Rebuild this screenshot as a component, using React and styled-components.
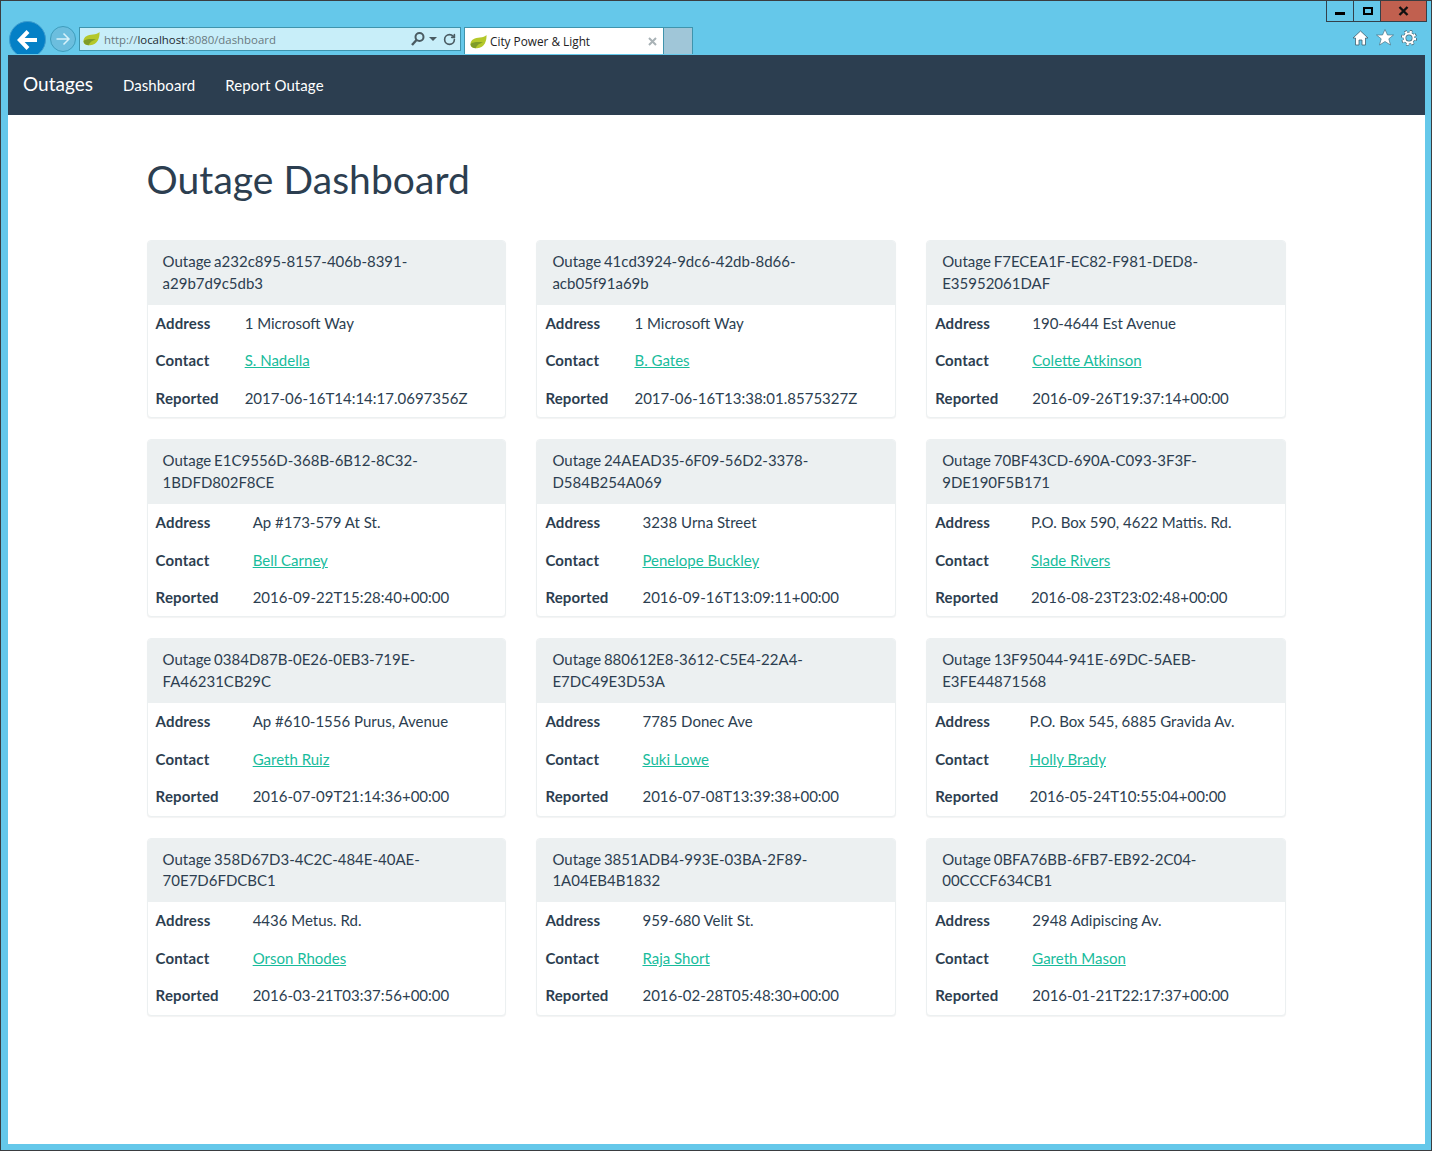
import styled, { createGlobalStyle } from "styled-components";
import { RotateCw } from "lucide-react";

const outages = [
  { id: "a232c895-8157-406b-8391-a29b7d9c5db3", address: "1 Microsoft Way", contact: "S. Nadella", reported: "2017-06-16T14:14:17.0697356Z" },
  { id: "41cd3924-9dc6-42db-8d66-acb05f91a69b", address: "1 Microsoft Way", contact: "B. Gates", reported: "2017-06-16T13:38:01.8575327Z" },
  { id: "F7ECEA1F-EC82-F981-DED8-E35952061DAF", address: "190-4644 Est Avenue", contact: "Colette Atkinson", reported: "2016-09-26T19:37:14+00:00" },
  { id: "E1C9556D-368B-6B12-8C32-1BDFD802F8CE", address: "Ap #173-579 At St.", contact: "Bell Carney", reported: "2016-09-22T15:28:40+00:00" },
  { id: "24AEAD35-6F09-56D2-3378-D584B254A069", address: "3238 Urna Street", contact: "Penelope Buckley", reported: "2016-09-16T13:09:11+00:00" },
  { id: "70BF43CD-690A-C093-3F3F-9DE190F5B171", address: "P.O. Box 590, 4622 Mattis. Rd.", contact: "Slade Rivers", reported: "2016-08-23T23:02:48+00:00" },
  { id: "0384D87B-0E26-0EB3-719E-FA46231CB29C", address: "Ap #610-1556 Purus, Avenue", contact: "Gareth Ruiz", reported: "2016-07-09T21:14:36+00:00" },
  { id: "880612E8-3612-C5E4-22A4-E7DC49E3D53A", address: "7785 Donec Ave", contact: "Suki Lowe", reported: "2016-07-08T13:39:38+00:00" },
  { id: "13F95044-941E-69DC-5AEB-E3FE44871568", address: "P.O. Box 545, 6885 Gravida Av.", contact: "Holly Brady", reported: "2016-05-24T10:55:04+00:00" },
  { id: "358D67D3-4C2C-484E-40AE-70E7D6FDCBC1", address: "4436 Metus. Rd.", contact: "Orson Rhodes", reported: "2016-03-21T03:37:56+00:00" },
  { id: "3851ADB4-993E-03BA-2F89-1A04EB4B1832", address: "959-680 Velit St.", contact: "Raja Short", reported: "2016-02-28T05:48:30+00:00" },
  { id: "0BFA76BB-6FB7-EB92-2C04-00CCCF634CB1", address: "2948 Adipiscing Av.", contact: "Gareth Mason", reported: "2016-01-21T22:17:37+00:00" },
];

const Leaf = () => (
  <svg width="17" height="14" viewBox="0 0 17 14">
    <path d="M0.500 9C0.500 4.500 5 2.800 10 2.500C13 2.300 15 1.500 16.500 0C16.800 5 15 13 7 13.300C3 13.400 0.500 12 0.500 9Z" fill="#b4c82a" />
    <path d="M0.500 9C3 7 8 6.500 13 7.500C10 8 7 10 5.500 13.200C2.500 13 0.700 11.500 0.500 9Z" fill="#7f9c28" />
  </svg>
);

const App = () => {
  return (
    <Frame>
      <GlobalStyle />
      <Chrome>
        <Caption>
          <WindowButton>
            <MinimizeMark />
          </WindowButton>
          <WindowButton>
            <MaximizeMark />
          </WindowButton>
          <CloseButton>
            <svg width="11" height="10" viewBox="0 0 11 10">
              <path d="M1.500 1L9.500 9M9.500 1L1.500 9" stroke="#111" strokeWidth="2.400" />
            </svg>
          </CloseButton>
        </Caption>
        <Toolbar>
          <BackButton>
            <svg width="24" height="24" viewBox="0 0 24 24" fill="none">
              <path d="M21 12H4M12 3.500L3.800 12L12 20.500" stroke="#fff" strokeWidth="4" />
            </svg>
          </BackButton>
          <ForwardButton>
            <svg width="16" height="16" viewBox="0 0 16 16" fill="none">
              <path d="M1.500 8H13.500M8.500 2.500L14 8L8.500 13.500" stroke="#d8f2fa" strokeWidth="1.500" />
            </svg>
          </ForwardButton>
          <AddressBar>
            <Leaf />
            <Url>
              http://<strong>localhost</strong>:8080/dashboard
            </Url>
            <svg width="16" height="16" viewBox="0 0 16 16" fill="none">
              <circle cx="9.500" cy="6" r="4" stroke="#4a5b62" strokeWidth="2" />
              <path d="M6.500 9L2 14" stroke="#4a5b62" strokeWidth="2.400" />
            </svg>
            <DropArrow />
            <RotateCw size={13} color="#4a5b62" strokeWidth={3} />
          </AddressBar>
          <Tab>
            <Leaf />
            <TabTitle>City Power &amp; Light</TabTitle>
            <svg width="9" height="9" viewBox="0 0 9 9">
              <path d="M1 1L8 8M8 1L1 8" stroke="#a9b2b6" strokeWidth="2" />
            </svg>
          </Tab>
          <NewTab />
          <Tools>
            <svg width="17" height="16" viewBox="0 0 17 16">
              <path d="M8.500 1L16 8H13.500V15H10V10H7V15H3.500V8H1Z" fill="#fff" stroke="#40606e" strokeWidth="0.800" />
            </svg>
            <svg width="18" height="17" viewBox="0 0 18 17">
              <path d="M9 0.500L11.500 6H17.500L12.800 9.800L14.500 16L9 12.500L3.500 16L5.200 9.800L0.500 6H6.500Z" fill="#fff" stroke="#40606e" strokeWidth="0.600" />
            </svg>
            <svg width="16" height="16" viewBox="0 0 16 16" fill="none">
              <circle cx="8" cy="8" r="4.500" stroke="#40606e" strokeWidth="3.400" />
              <circle cx="8" cy="8" r="6.500" stroke="#40606e" strokeWidth="3" strokeDasharray="2.500 2.600" />
              <circle cx="8" cy="8" r="4.500" stroke="#fff" strokeWidth="2" />
              <circle cx="8" cy="8" r="6" stroke="#fff" strokeWidth="2.400" strokeDasharray="2.200 2.500" />
            </svg>
          </Tools>
        </Toolbar>
      </Chrome>
      <Page>
        <Navbar>
          <Brand href="#">Outages</Brand>
          <NavLink href="#">Dashboard</NavLink>
          <NavLink href="#">Report Outage</NavLink>
        </Navbar>
        <Container>
          <Title>Outage Dashboard</Title>
          <CardGrid>
            {outages.map((outage) => (
              <Card key={outage.id}>
                <CardHeader>{`Outage ${outage.id}`}</CardHeader>
                <DetailTable>
                  <tbody>
                    <tr>
                      <th>Address</th>
                      <td>{outage.address}</td>
                    </tr>
                    <tr>
                      <th>Contact</th>
                      <td>
                        <ContactLink href="#">{outage.contact}</ContactLink>
                      </td>
                    </tr>
                    <tr>
                      <th>Reported</th>
                      <td>{outage.reported}</td>
                    </tr>
                  </tbody>
                </DetailTable>
              </Card>
            ))}
          </CardGrid>
        </Container>
      </Page>
    </Frame>
  );
};

export default App;

const GlobalStyle = createGlobalStyle`
  * {
    box-sizing: border-box;
  }
  body {
    margin: 0;
    font-family: Lato, "Liberation Sans", sans-serif;
    font-size: 15px;
    line-height: 1.42857;
    color: #2c3e50;
  }
`;

const Frame = styled.div`
  display: flex;
  flex-direction: column;
  height: 1151px;
  padding: 0 6px 6px 7px;
  background: #65c8ea;
  border: 1px solid #3a3d40;
`;

const Chrome = styled.div`
  height: 53px;
  flex: none;
  margin-left: -7px;
  margin-right: -6px;
  overflow: hidden;
`;

const Caption = styled.div`
  display: flex;
  justify-content: flex-end;
  height: 21px;
  padding-right: 4px;
`;

const WindowButton = styled.div`
  display: flex;
  align-items: center;
  justify-content: center;
  width: 28px;
  height: 21px;
  border: 1px solid #33404a;
  border-top: 0;
  margin-left: -1px;
`;

const CloseButton = styled(WindowButton)`
  width: 47px;
  background: #c1604f;
`;

const MinimizeMark = styled.span`
  width: 10px;
  height: 3px;
  margin-top: 5px;
  background: #000;
`;

const MaximizeMark = styled.span`
  width: 10px;
  height: 8px;
  margin-left: 1px;
  border: 2px solid #000;
`;

const Toolbar = styled.div`
  display: flex;
  align-items: flex-start;
  height: 32px;
  padding: 5px 0 0 8px;
`;

const BackButton = styled.div`
  display: flex;
  flex: none;
  align-items: center;
  justify-content: center;
  width: 37px;
  height: 37px;
  margin-top: -6px;
  border-radius: 50%;
  background: #0480c6;
  border: 1px solid #3c9ccf;
`;

const ForwardButton = styled.div`
  display: flex;
  flex: none;
  align-items: center;
  justify-content: center;
  width: 26px;
  height: 26px;
  margin: -1px 2px 0 4px;
  border-radius: 50%;
  background: #6cbede;
  border: 1px solid #3f9dbd;
`;

const AddressBar = styled.div`
  display: flex;
  flex: none;
  align-items: center;
  width: 382px;
  height: 24px;
  margin-left: 1px;
  padding: 0 4px 0 3px;
  background: #c8eef9;
  border: 1px solid #3f94ad;
`;

const Url = styled.span`
  flex: 1;
  margin: 2px 0 0 4px;
  font-family: "Open Sans", sans-serif;
  font-size: 11.4px;
  color: #68797f;
  white-space: nowrap;

  strong {
    font-weight: 400;
    color: #1d2a30;
  }
`;

const DropArrow = styled.span`
  width: 0;
  height: 0;
  margin: 0 6px 0 3px;
  border-left: 4px solid transparent;
  border-right: 4px solid transparent;
  border-top: 4px solid #4a5b62;
`;

const Tab = styled.div`
  display: flex;
  flex: none;
  align-items: center;
  width: 199px;
  height: 28px;
  margin-left: 3px;
  padding: 0 6px 0 5px;
  background: #fff;
  border: 1px solid #3f94ad;
  border-bottom: 0;
  border-right: 0;
`;

const TabTitle = styled.span`
  flex: 1;
  margin-left: 3px;
  font-family: "Open Sans", sans-serif;
  font-size: 11.8px;
  color: #222;
  white-space: nowrap;
`;

const NewTab = styled.div`
  flex: none;
  width: 30px;
  height: 28px;
  background: #a0c6d8;
  border: 1px solid #3f94ad;
  border-bottom: 0;
`;

const Tools = styled.div`
  display: flex;
  align-items: center;
  gap: 7px;
  margin: 2px 0 0 auto;
  padding-right: 14px;
`;

const Page = styled.div`
  flex: 1;
  margin-top: 1px;
  background: #fff;
`;

const Navbar = styled.nav`
  display: flex;
  align-items: center;
  height: 60px;
  background: #2c3e50;
`;

const Brand = styled.a`
  padding: 0 15px 2px;
  font-size: 19px;
  color: #fff;
  text-decoration: none;
`;

const NavLink = styled.a`
  padding: 2px 15px 0;
  letter-spacing: 0.1px;
  color: #fff;
  text-decoration: none;
`;

const Container = styled.main`
  width: 1170px;
  margin: 0 auto;
  padding: 0 15px 0 15.1px;
`;

const Title = styled.h1`
  margin: 43px 0 39.3px;
  font-size: 39px;
  font-weight: 400;
  line-height: 1.1;
  letter-spacing: 0.05px;
`;

const CardGrid = styled.div`
  display: grid;
  grid-template-columns: repeat(3, 359.8px);
  column-gap: 30px;
  row-gap: 21px;
`;

const Card = styled.section`
  background: #fff;
  border: 1px solid #ecf0f1;
  border-radius: 4px;
  box-shadow: 0 1px 1px rgba(0, 0, 0, 0.05);
`;

const CardHeader = styled.div`
  padding: 10px 15px;
  word-spacing: -1px;
  background: #ecf0f1;
  border-bottom: 1px solid #ecf0f1;
  border-radius: 3px 3px 0 0;
`;

const DetailTable = styled.table`
  width: 100%;
  border-collapse: collapse;

  th,
  td {
    padding: 8px;
    text-align: left;
    vertical-align: top;
  }

  th {
    letter-spacing: 0.15px;
  }
`;

const ContactLink = styled.a`
  color: #18bc9c;
  text-decoration: underline;
`;
